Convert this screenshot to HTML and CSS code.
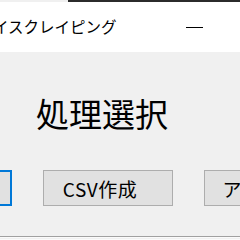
FILE: index.html
```html
<!DOCTYPE html>
<html lang="ja">
<head>
<meta charset="utf-8">
<link rel="stylesheet" href="styles.css">
</head>
<body>
<div class="window">
  <div class="topstrip"></div>
  <div class="titlebar">
    <span class="title">イスクレイピング</span>
    <span class="minimize"></span>
  </div>
  <div class="content">
    <h1 class="heading">処理選択</h1>
    <div class="buttons">
      <button class="btn focused">取得開始</button>
      <button class="btn">CSV作成</button>
      <button class="btn">アクセス</button>
    </div>
  </div>
  <div class="bottomline"></div>
</div>
</body>
</html>
```
FILE: styles.css
```css
html, body {
  margin: 0;
  padding: 0;
  width: 240px;
  height: 240px;
  overflow: hidden;
  background: #f0f0f0;
}
.window {
  width: 240px;
  height: 240px;
  display: flex;
  flex-direction: column;
  overflow: hidden;
  font-family: "Noto Sans CJK JP", "Noto Sans", sans-serif;
}
.topstrip {
  height: 2px;
  margin-left: 68px;
  background: #2b2b2b;
  flex: none;
}
.titlebar {
  height: 50px;
  background: #ffffff;
  display: flex;
  align-items: center;
  flex: none;
  position: relative;
}
.title {
  font-size: 15.5px;
  color: #000;
  margin-left: -7px;
  white-space: nowrap;
  line-height: 1;
}
.minimize {
  position: absolute;
  left: 186px;
  top: 25px;
  width: 17px;
  height: 1px;
  background: #000;
}
.content {
  flex: 1;
  background: #f0f0f0;
  display: flex;
  flex-direction: column;
}
.heading {
  margin: 45px 0 0 36px;
  font-size: 33px;
  font-weight: normal;
  line-height: 1;
  color: #000;
  white-space: nowrap;
}
.buttons {
  display: flex;
  gap: 31px;
  margin-top: 40px;
  margin-left: -118px;
}
.btn {
  flex: none;
  width: 130px;
  height: 36px;
  box-sizing: border-box;
  background: #e1e1e1;
  border: 1px solid #adadad;
  font-family: "Noto Sans CJK JP", "Noto Sans", sans-serif;
  font-size: 19px;
  letter-spacing: 0.5px;
  color: #000;
  padding: 0 16px 0 0;
  line-height: 1;
  white-space: nowrap;
}
.btn.focused {
  border: 2px solid #0078d7;
  background: #e1e1e1;
}
.bottomline {
  height: 1px;
  background: #a0a0a0;
  flex: none;
  margin-bottom: 3px;
  box-shadow: 0 1px 0 #fafafa, 0 3px 0 #fafafa;
}
```
